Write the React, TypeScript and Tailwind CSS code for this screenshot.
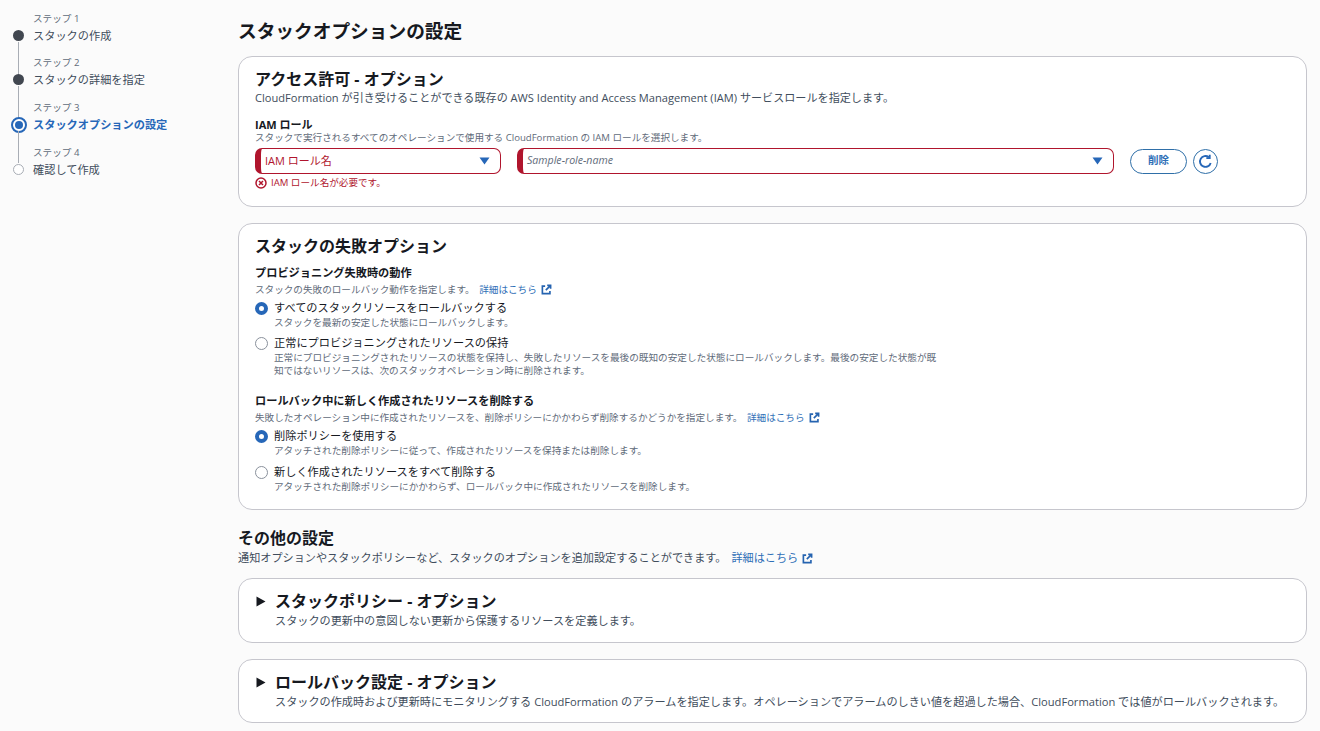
import React from "react";

const font = { fontFamily: '"Open Sans","Noto Sans CJK JP",sans-serif' };

function Ext() {
  return (
    <svg width="11" height="11" viewBox="0 0 16 16" fill="none" stroke="#2563b0" strokeWidth="2.4" className="inline-block ml-[4px] align-[-2px]">
      <path d="M6 3H2v11h11v-4" />
      <path d="M9 2h5v5M14 2 7 9" />
    </svg>
  );
}

function Learn() {
  return (
    <span className="text-[#2f6fb7] ml-[2px]">詳細はこちら<Ext /></span>
  );
}

function Radio({ on }: { on?: boolean }) {
  return on ? (
    <span className="block w-[13px] h-[13px] rounded-full border-[4px] border-[#2667b8] bg-white shrink-0" />
  ) : (
    <span className="block w-[13px] h-[13px] rounded-full border border-[#8a919c] bg-white shrink-0" />
  );
}

function Option({ on, title, desc, mb }: { on?: boolean; title: string; desc: React.ReactNode; mb: string }) {
  return (
    <div className={`flex gap-[6px] ${mb}`}>
      <div className="pt-[2px]"><Radio on={on} /></div>
      <div>
        <div className="text-[11.2px] leading-[16px] text-[#16191f]">{title}</div>
        <div className="text-[9.63px] leading-[13px] text-[#5f6b7a]">{desc}</div>
      </div>
    </div>
  );
}

function Select({ label, italic, w, arrowPad }: { label: string; italic?: boolean; w: string; arrowPad: string }) {
  return (
    <div className={`${w} h-[26px] rounded-[7px] border border-[#b0152d] border-l-[6px] bg-white flex items-center justify-between pl-[4px] ${arrowPad}`}>
      <span className={italic ? "text-[10.6px] italic text-[#5f6b7a]" : "text-[11px] text-[#b0152d]"}>{label}</span>
      <svg width="11" height="8" viewBox="0 0 11 8"><path d="M0.5 0.5h10L5.5 7.5z" fill="#2667b8" /></svg>
    </div>
  );
}

function Step({ n, label, kind, mb }: { n: number; label: string; kind: "done" | "active" | "todo"; mb: string }) {
  return (
    <div className={`relative pl-[33px] ${mb}`}>
      <div className="text-[9.6px] leading-[13px] text-[#5f6b7a]">ステップ {n}</div>
      <div className={`text-[11.2px] leading-[22px] ${kind === "active" ? "font-bold text-[#2667b8]" : "text-[#414d5c]"}`}>{label}</div>
      {kind === "done" && <span className="absolute left-[13px] top-[18px] w-[11px] h-[11px] rounded-full bg-[#414750]" />}
      {kind === "active" && (
        <span className="absolute left-[11px] top-[16px] w-[16px] h-[16px] rounded-full border-[2px] border-[#2667b8] bg-white flex items-center justify-center">
          <span className="block w-[8px] h-[8px] rounded-full bg-[#2667b8]" />
        </span>
      )}
      {kind === "todo" && <span className="absolute left-[13px] top-[18px] w-[11px] h-[11px] rounded-full border-[1.5px] border-[#a8adb5] bg-white" />}
      {kind !== "todo" && <span className="absolute left-[18px] top-[30px] w-px h-[32px] bg-[#a8adb5]" />}
    </div>
  );
}

function Expand({ title, desc, h, mb }: { title: string; desc: string; h: string; mb: string }) {
  return (
    <div className={`${h} ${mb} rounded-[14px] border border-[#c6c6cd] bg-white pl-[18px] pt-[12px] flex gap-[9px]`}>
      <svg width="10" height="11" viewBox="0 0 10 11" className="mt-[5px] -ml-[1px] shrink-0"><path d="M0.5 0.5 9.5 5.5 0.5 10.5z" fill="#16191f" /></svg>
      <div>
        <div className="text-[16px] leading-[20px] font-bold text-[#16191f]">{title}</div>
        <div className="text-[11.15px] leading-[14px] mt-[3px] text-[#414d5c] whitespace-nowrap">{desc}</div>
      </div>
    </div>
  );
}

export default function App() {
  return (
    <div style={font} className="w-[1320px] h-[731px] overflow-hidden bg-[#fbfbfb] flex">
      <aside className="w-[238px] shrink-0 pt-[12px]">
        <Step n={1} label="スタックの作成" kind="done" mb="mb-[9px]" />
        <Step n={2} label="スタックの詳細を指定" kind="done" mb="mb-[10px]" />
        <Step n={3} label="スタックオプションの設定" kind="active" mb="mb-[10px]" />
        <Step n={4} label="確認して作成" kind="todo" mb="" />
      </aside>
      <main className="w-[1069px] shrink-0 pt-[18px]">
        <h1 className="text-[18.7px] leading-[26px] font-bold text-[#16191f] mb-[12px]">スタックオプションの設定</h1>

        <section className="h-[151px] rounded-[14px] border border-[#c6c6cd] bg-white px-[16px] pt-[12px] mb-[16px]">
          <h2 className="text-[16px] leading-[20px] font-bold text-[#16191f]">アクセス許可 - オプション</h2>
          <p className="text-[11.1px] leading-[14px] mt-[2px] text-[#414d5c]">CloudFormation が引き受けることができる既存の AWS Identity and Access Management (IAM) サービスロールを指定します。</p>
          <div className="text-[11px] leading-[14px] font-bold text-[#16191f] mt-[13px]">IAM ロール</div>
          <div className="text-[9.6px] leading-[12px] text-[#5f6b7a]">スタックで実行されるすべてのオペレーションで使用する CloudFormation の IAM ロールを選択します。</div>
          <div className="flex items-center mt-[4px]">
            <Select label="IAM ロール名" w="w-[246px]" arrowPad="pr-[10px]" />
            <div className="w-[16px]" />
            <Select label="Sample-role-name" italic w="w-[597px]" arrowPad="pr-[10px]" />
            <button className="ml-[16px] w-[57px] h-[25px] rounded-full border border-[#2f6fa8] text-[10.5px] font-bold text-[#2f6fb7] bg-white">削除</button>
            <span className="ml-[6px] w-[25px] h-[25px] rounded-full border border-[#2f6fa8] bg-white flex items-center justify-center">
              <svg width="15" height="15" viewBox="0 0 16 16" fill="none" stroke="#2667b8" strokeWidth="2">
                <path d="M13.5 9.5A5.8 5.8 0 1 1 11.5 3.4" />
                <path d="M12.5 0.8v3.6H8.9" />
              </svg>
            </span>
          </div>
          <div className="flex items-center gap-[4px] mt-[1px] text-[9.6px] leading-[15px] text-[#b0152d]">
            <svg width="12" height="12" viewBox="0 0 12 12" fill="none" stroke="#b0152d" strokeWidth="1.5">
              <circle cx="6" cy="6" r="5" />
              <path d="M4 4l4 4M8 4l-4 4" />
            </svg>
            <span>IAM ロール名が必要です。</span>
          </div>
        </section>

        <section className="h-[287px] rounded-[14px] border border-[#c6c6cd] bg-white px-[16px] pt-[12px] mb-[18px]">
          <h2 className="text-[16px] leading-[20px] font-bold text-[#16191f] mb-[10px]">スタックの失敗オプション</h2>
          <div className="text-[11.2px] leading-[14px] font-bold text-[#16191f]">プロビジョニング失敗時の動作</div>
          <div className="text-[9.6px] leading-[16px] mt-[2px] text-[#5f6b7a] mb-[2px]">スタックの失敗のロールバック動作を指定します。 <Learn /></div>
          <Option on title="すべてのスタックリソースをロールバックする" desc="スタックを最新の安定した状態にロールバックします。" mb="mb-[6px]" />
          <Option
            title="正常にプロビジョニングされたリソースの保持"
            desc={<>正常にプロビジョニングされたリソースの状態を保持し、失敗したリソースを最後の既知の安定した状態にロールバックします。最後の安定した状態が既<br />知ではないリソースは、次のスタックオペレーション時に削除されます。</>}
            mb="mb-[17px]"
          />
          <div className="text-[11.2px] leading-[14px] font-bold text-[#16191f]">ロールバック中に新しく作成されたリソースを削除する</div>
          <div className="text-[9.6px] leading-[16px] mt-[2px] text-[#5f6b7a] mb-[2px]">失敗したオペレーション中に作成されたリソースを、削除ポリシーにかかわらず削除するかどうかを指定します。 <Learn /></div>
          <Option on title="削除ポリシーを使用する" desc="アタッチされた削除ポリシーに従って、作成されたリソースを保持または削除します。" mb="mb-[7px]" />
          <Option title="新しく作成されたリソースをすべて削除する" desc="アタッチされた削除ポリシーにかかわらず、ロールバック中に作成されたリソースを削除します。" mb="" />
        </section>

        <h2 className="text-[16px] leading-[20px] font-bold text-[#16191f]">その他の設定</h2>
        <p className="text-[11.15px] leading-[16px] mt-[2px] text-[#414d5c] mb-[12px]">通知オプションやスタックポリシーなど、スタックのオプションを追加設定することができます。 <Learn /></p>

        <Expand h="h-[65px]" mb="mb-[16px]" title="スタックポリシー - オプション" desc="スタックの更新中の意図しない更新から保護するリソースを定義します。" />
        <Expand h="h-[64px]" mb="" title="ロールバック設定 - オプション" desc="スタックの作成時および更新時にモニタリングする CloudFormation のアラームを指定します。オペレーションでアラームのしきい値を超過した場合、CloudFormation では値がロールバックされます。" />
      </main>
    </div>
  );
}
